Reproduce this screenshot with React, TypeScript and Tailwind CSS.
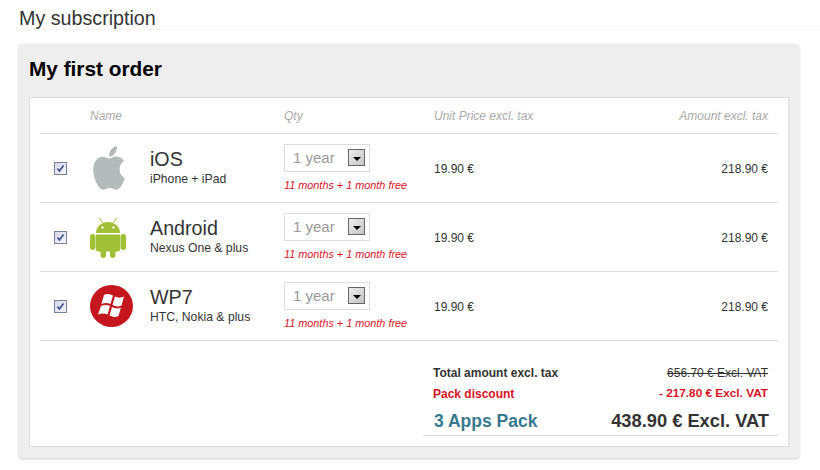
import { FaApple } from "react-icons/fa";

const apps = [
  { name: "iOS", sub: "iPhone + iPad", icon: <AppleIcon /> },
  { name: "Android", sub: "Nexus One & plus", icon: <AndroidIcon /> },
  { name: "WP7", sub: "HTC, Nokia & plus", icon: <WindowsIcon /> },
];

function AppleIcon() {
  return <FaApple className="ml-[-1px] h-[50px] w-[40px] scale-x-[0.86] text-[#b5babb]" />;
}

function AndroidIcon() {
  return (
    <svg width="36" height="41" viewBox="0 0 36 41" fill="#9fc037">
      <path d="M9.500 1l3 5M26.500 1l-3 5" stroke="#9fc037" strokeWidth="1" fill="none" />
      <path d="M6 16c0-6 5-11 12-11s12 5 12 11z" />
      <circle cx="12.500" cy="10.500" r="1.200" fill="#fff" />
      <circle cx="23.500" cy="10.500" r="1.200" fill="#fff" />
      <path d="M6 17.500h24v15a2 2 0 0 1-2 2H8a2 2 0 0 1-2-2z" />
      <rect x="0" y="17" width="5.500" height="16" rx="2.700" />
      <rect x="30.500" y="17" width="5.500" height="16" rx="2.700" />
      <rect x="10.500" y="30" width="5.500" height="11" rx="2.700" />
      <rect x="20" y="30" width="5.500" height="11" rx="2.700" />
    </svg>
  );
}

function WindowsIcon() {
  return (
    <svg width="43" height="42" viewBox="0 0 43 42">
      <ellipse cx="21.500" cy="21" rx="21.500" ry="21" fill="#c4161c" />
      <path d="M14 10C17 8.500 20 9 23 10.500L20.500 19C17.500 17.500 14.500 17.500 11.500 19Z" fill="#fff" />
      <path d="M25 11.500C28 13 31 13 34 11.500L31.500 20.500C28.500 22 25.500 21.500 22.500 20Z" fill="#fff" />
      <path d="M11 21C14 19.500 17 19.500 20 21L17.500 29.500C14.500 28 11.500 28 8 29.500Z" fill="#fff" />
      <path d="M22 22C25 23.500 28 24 31 22.500L28.500 31C25.500 32.500 22.500 32 19.500 30.500Z" fill="#fff" />
    </svg>
  );
}

function Checkbox() {
  return (
    <span className="flex h-[13px] w-[13px] items-center justify-center border border-[#7b819b] bg-[linear-gradient(135deg,#d5d8e6,#f4f5fa)]">
      <svg width="9" height="9" viewBox="0 0 9 9" fill="none">
        <path d="M1.500 4.500l2 2.500 4-5.500" stroke="#3b4a8c" strokeWidth="1.600" />
      </svg>
    </span>
  );
}

function YearSelect() {
  return (
    <div className="flex h-[28px] w-[86px] items-center justify-between border border-[#ddd] bg-white pl-2 pr-1">
      <span className="pt-[2px] text-[15px] text-[#999]">1 year</span>
      <span className="flex h-[17px] w-[17px] items-center justify-center border border-[#666] bg-[linear-gradient(135deg,#eee,#c4c4c4)]">
        <span className="mt-[2px] border-x-[4px] border-t-[4px] border-x-transparent border-t-black" />
      </span>
    </div>
  );
}

const grid = "grid grid-cols-[50px_194px_150px_1fr] items-center";

export default function App() {
  return (
    <div className="h-[470px] w-[820px] bg-white pl-[19px] font-['Liberation_Sans',Arial,sans-serif] text-[#333]">
      <h1 className="h-[30px] border-b border-[#f4f4f4] pt-[6px] text-[19.700px] leading-[24px] text-[#333]">
        My subscription
      </h1>
      <section className="mt-[14px] h-[414px] w-[780px] rounded-[3px] bg-[#eee] px-[10px] pt-[12px] shadow-[0_1px_3px_#ccc]">
        <h2 className="h-[41px] text-[20.800px] font-bold leading-[26px] text-black">My first order</h2>
        <div className="h-[350px] border border-[#ddd] bg-white px-[10px]">
          <div className={`${grid} h-[36px] border-b border-[#ddd] pt-[1px] text-[12px] italic text-[#aaa]`}>
            <span />
            <span>Name</span>
            <span>Qty</span>
            <span className="flex justify-between pr-[10px]">
              <span>Unit Price excl. tax</span>
              <span>Amount excl. tax</span>
            </span>
          </div>
          {apps.map((app) => (
            <div key={app.name} className={`${grid} h-[69px] border-b border-[#ddd]`}>
              <span className="pl-[14px]">
                <Checkbox />
              </span>
              <div className="flex items-center">
                <span className="flex w-[60px] items-center">{app.icon}</span>
                <div className="mt-[-2px]">
                  <div className="text-[19.700px] leading-[22px]">{app.name}</div>
                  <div className="mt-[1px] text-[12.200px] leading-[16px]">{app.sub}</div>
                </div>
              </div>
              <div className="mt-[-1px]">
                <YearSelect />
                <div className="mt-[6px] text-[10.850px] leading-[14px] italic text-[#d8121f]">
                  11 months + 1 month free
                </div>
              </div>
              <div className="mt-[2px] flex justify-between pr-[10px] text-[12px]">
                <span>19.90 €</span>
                <span>218.90 €</span>
              </div>
            </div>
          ))}
          <div className="ml-[383px] mt-[21px] w-[355px] text-[12px] font-bold">
            <div className="flex h-[21px] items-center justify-between pl-[10px] pr-[10px]">
              <span>Total amount excl. tax</span>
              <span className="font-normal line-through">656.70 € Excl. VAT</span>
            </div>
            <div className="flex h-[21px] items-center justify-between pl-[10px] pr-[10px] text-[#d8121f]">
              <span>Pack discount</span>
              <span className="text-[11.800px]">- 217.80 € Excl. VAT</span>
            </div>
            <div className="flex h-[32px] items-center justify-between border-b border-[#ddd] pl-[11px] pr-[9px] pt-[3px]">
              <span className="text-[17.500px] text-[#37788f]">3 Apps Pack</span>
              <span className="text-[18.300px]">438.90 € Excl. VAT</span>
            </div>
          </div>
        </div>
      </section>
    </div>
  );
}
